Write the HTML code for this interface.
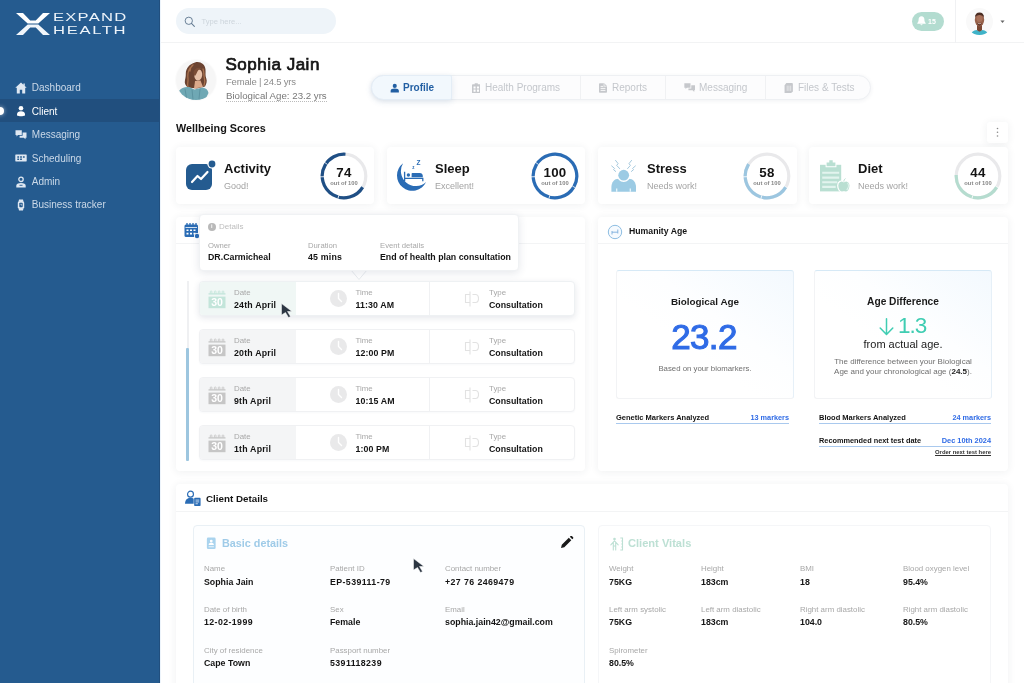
<!DOCTYPE html>
<html lang="en">
<head>
<meta charset="utf-8">
<title>Expand Health - Client Profile</title>
<style>
*{box-sizing:border-box;margin:0;padding:0}
html,body{width:1024px;height:683px;overflow:hidden;background:#fff;font-family:"Liberation Sans",sans-serif;color:#111}
body{will-change:transform}
.abs{position:absolute}
#side{position:absolute;left:0;top:0;width:160px;height:683px;background:#255b8f;border-right:1px solid #214f7e}
#side .item{position:absolute;left:0;width:160px;height:23px;color:#cbd9e8;font-size:10px;line-height:23px;padding-left:31.800px;white-space:nowrap}
#side .item.act{color:#fff}
#side .item svg{position:absolute;left:15px;top:5.500px;width:12px;height:12px}
#top{position:absolute;left:160px;top:0;width:864px;height:43px;background:#fff;border-bottom:1px solid #f2f3f4}
.card{position:absolute;background:#fff;border-radius:4px;box-shadow:0 1px 8px rgba(40,50,70,.075)}
.t{position:absolute;white-space:nowrap;line-height:1}
.c{text-align:center}
.r{text-align:right}
.box{border:1px solid #f2f3f5;border-top-color:#d6e9f6;border-right-color:#e6f0f8;border-radius:3px;background:linear-gradient(to bottom left,#f3f9fe 0,#fdfeff 40%,#fff 60%)}
</style>
</head>
<body>
<div id="side">
  <svg class="abs" style="left:16px;top:13px" width="34" height="22" viewBox="0 0 34 22"><path d="M0 0H7L14.200 7.500H19.800L27 0H34L22.300 10.600H11.700z" fill="#fff"/><path d="M0 22H7L14.200 14.500H19.800L27 22H34L22.300 11.400H11.700z" fill="#f1f6fb"/></svg>
  <div class="t" id="lg1" style="left:53.300px;top:12.500px;font-size:10.400px;color:#eef4fa;letter-spacing:.750px;transform-origin:0 0;transform:scaleX(1.6)">EXPAND</div>
  <div class="t" id="lg2" style="left:53.300px;top:25.800px;font-size:10.400px;color:#eef4fa;letter-spacing:1.030px;transform-origin:0 0;transform:scaleX(1.6)">HEALTH</div>
  <div class="item" style="top:76px"><svg viewBox="0 0 12 12"><path d="M6 .6L.3 5.800h1.500V11.400h3V7.800h2.400v3.600h3V5.800h1.500L9.800 4V1.400H8.400v1.400z" fill="#dfe8f2"/></svg>Dashboard</div>
  <div class="abs" style="left:0;top:98.500px;width:160px;height:23.500px;background:#214f7e"></div>
  <div class="item act" style="top:99.500px"><svg viewBox="0 0 12 12"><circle cx="6" cy="3.300" r="2.300" fill="#fff"/><path d="M2 10.500v-1.300C2 7.300 3.600 6.200 6 6.200s4 1.100 4 3v1.300c-1 .5-2.500.8-4 .8s-3-.3-4-.8z" fill="#fff"/></svg>Client</div>
  <div class="item" style="top:123px"><svg viewBox="0 0 12 12"><path d="M.5 1.300h6.300v4.700H3l-1.500 1.400V6H.5z" fill="#dfe8f2"/><path d="M7.600 3.500h3.900v5.200h-1v1.600L8.800 8.700H4.600V6.800h3z" fill="#dfe8f2"/></svg>Messaging</div>
  <div class="item" style="top:146.500px"><svg viewBox="0 0 12 12"><path d="M.8 2.400h10.400c.3 0 .5.2.5.5v6.200c0 .3-.2.500-.5.500H.8c-.3 0-.5-.2-.5-.5V2.900c0-.3.2-.5.500-.5z" fill="#dfe8f2"/><path d="M2.300 4.200h1.800v1.500H2.300zM5.100 4.200h1.800v1.500H5.100zM7.900 4.200h1.800v1.500H7.900zM2.300 6.600h1.800v1.500H2.300zM5.100 6.600h1.800v1.500H5.100z" fill="#255b8f"/></svg>Scheduling</div>
  <div class="item" style="top:170px"><svg viewBox="0 0 12 12"><circle cx="6" cy="3.300" r="2.200" fill="none" stroke="#dfe8f2" stroke-width="1.300"/><path d="M1.300 11.500V9.800C1.300 8 3 7 6 7s4.700 1 4.700 2.800v1.700z" fill="#dfe8f2"/><path d="M4.500 9.300h3" stroke="#255b8f" stroke-width=".9"/></svg>Admin</div>
  <div class="item" style="top:193px"><svg viewBox="0 0 12 12"><path d="M4 .5h4l.4 1.800H3.600zM3.600 9.700h4.800L8 11.500H4z" fill="#dfe8f2"/><rect x="2.800" y="2" width="6.400" height="8" rx="1.800" fill="#dfe8f2"/><rect x="4.300" y="3.800" width="3.400" height="4.400" rx=".8" fill="#255b8f"/><path d="M6 4.800V6h1" stroke="#dfe8f2" stroke-width=".7" fill="none"/></svg>Business tracker</div>
  <div class="abs" style="left:-4px;top:107px;width:8px;height:8px;border-radius:50%;background:#fff;box-shadow:0 0 4px rgba(255,255,255,.6)"></div>
</div>
<div id="top">
  <div class="abs" style="left:16px;top:8px;width:160px;height:26px;border-radius:13px;background:#eef4f9"></div>
  <div class="abs" style="left:752px;top:12px;width:32px;height:19px;border-radius:10px;background:#b3dcd0"></div>
  <svg class="abs" style="left:24px;top:15.500px" width="11.500" height="11.500" viewBox="0 0 12 12"><circle cx="5" cy="5" r="3.800" fill="none" stroke="#647b92" stroke-width="1"/><path d="M7.800 7.800l3 3" stroke="#647b92" stroke-width="1.100" stroke-linecap="round"/></svg>
  <svg class="abs" style="left:757px;top:16px" width="9" height="10" viewBox="0 0 9 10"><path d="M4.500.3C2.600.3 1.600 1.800 1.600 3.600c0 2-.6 2.800-1.300 3.500v.6h8.400v-.6C8 6.400 7.400 5.600 7.400 3.600 7.400 1.800 6.400.3 4.500.3zM3.400 8.300c.1.600.5 1 1.100 1s1-.4 1.100-1z" fill="#fff"/></svg>
  <svg class="abs" style="left:806px;top:8px" width="27" height="27" viewBox="0 0 27 27">
    <defs><clipPath id="cpB"><circle cx="13.500" cy="13.500" r="13.500"/></clipPath></defs>
    <g clip-path="url(#cpB)"><rect width="27" height="27" fill="#f9f9f9"/>
    <path d="M5 27c.3-3 2.500-4.500 5.500-5l3 1.300 3-1.300c3 .5 5.200 2 5.500 5z" fill="#3fb3c8"/>
    <path d="M11 17h5v5.200l-2.500 1.600L11 22.200z" fill="#7a4733"/>
    <ellipse cx="13.500" cy="11.800" rx="4.700" ry="6.600" fill="#96604a"/>
    <ellipse cx="13.500" cy="10.500" rx="3" ry="3.500" fill="#a8715a"/>
    <path d="M8.900 10c0-3.600 2-5.400 4.600-5.400s4.600 1.800 4.600 5.400c-.8-2.200-2.300-3-4.600-3s-3.800.8-4.600 3z" fill="#4a2c22"/>
    <path d="M11.200 14.800c1.300 1.400 3.300 1.400 4.600 0-.5 2.200-1.300 3-2.300 3s-1.800-.8-2.300-3z" fill="#5c3327"/>
    <path d="M11.900 15.300c1 .5 2.200.5 3.200 0" stroke="#f3e4dc" stroke-width=".6" fill="none"/></g>
  </svg>
  <svg class="abs" style="left:839.500px;top:19.800px" width="5" height="3.500" viewBox="0 0 6 4"><path d="M.5.500h5L3 3.500z" fill="#666"/></svg>
  <div class="t" style="left:41.500px;top:17.500px;font-size:7.600px;color:#cdd5dc">Type here...</div>
  <div class="t" style="left:768px;top:18px;font-size:7px;color:#fff;font-weight:bold">15</div>
  <div class="abs" style="left:794.500px;top:0;width:1px;height:43px;background:#f0f1f3"></div>
</div>
<div id="main">
  <div class="abs" style="left:160px;top:0;width:1px;height:683px;background:#edf4fb"></div>
  <!-- profile header -->
  <svg class="abs" style="left:174px;top:58px" width="44" height="44" viewBox="-2 -2 44 44">
    <defs><clipPath id="cpA"><circle cx="20" cy="20" r="20"/></clipPath></defs>
    <circle cx="20" cy="20" r="21" fill="#fbfbfb"/>
    <g clip-path="url(#cpA)">
      <rect width="40" height="40" fill="#f6f6f6"/>
      <path d="M19 2.500c5-1.500 10 1.500 10.500 7 .3 3.500-.5 6 .8 9 1 2.500.2 5.500-1.300 8l-8 2-9-1c-2.500-2-3.800-4.500-3-7.500.6-2.500.8-4 .8-6.500 0-5 3.500-9.500 9.200-11z" fill="#6b4331"/>
      <path d="M14 8c-2 3-2.500 7-2 11 .3 3-1 5 0 7.500M27 9c1.500 3 .5 7 1.500 10 .8 2.500 0 5-.5 6.500M17 5c-2 1.500-3 4-3 6" fill="none" stroke="#a8714e" stroke-width="1.300" stroke-linecap="round"/>
      <path d="M19 21l5.500-.5 2.500 6.500-9 1.500z" fill="#dba98b"/>
      <ellipse cx="22.300" cy="15" rx="3.900" ry="5.600" transform="rotate(8 22.300 15)" fill="#e8c2a9"/>
      <path d="M17.500 12c1-3.500 4.500-5.500 8.500-3.500-2.500.3-4 1.500-4.800 3.500-.5 1.500-1.200 2.800-2.200 4-.8-1-1.700-2.500-1.500-4z" fill="#7b4d36"/>
      <path d="M3 31c2-3 6-4.500 10-4l5.500 2.500 8-2c3.500.5 5.500 2.500 6 5.500l-3 6-12 2-11-3z" fill="#6fa8b4"/>
      <path d="M9 29l1.500 9M16 29.500l1 10M24 29l-1 10" stroke="#5c93a0" stroke-width="1" fill="none"/>
    </g>
  </svg>
  <div class="t" style="left:225.500px;top:56px;font-size:17px;letter-spacing:.5px;color:#141414;-webkit-text-stroke:.7px #141414">Sophia Jain</div>
  <div class="t" style="left:226px;top:77px;font-size:9.500px;letter-spacing:-.2px;color:#8b8b8b">Female | 24.5 yrs</div>
  <div class="t" style="left:226px;top:91px;font-size:9.700px;color:#777;border-bottom:1px dotted #bbb;padding-bottom:0">Biological Age: 23.2 yrs</div>

  <!-- tabs -->
  <div class="abs" style="left:371px;top:75px;width:500px;height:25px;border-radius:13px;background:#fcfcfd;border:1px solid #eef0f3;box-shadow:0 1px 4px rgba(40,60,90,.07)"></div>
  <div class="abs" style="left:371px;top:75px;width:81px;height:25px;border-radius:13px 2px 2px 13px;background:#f2f8fd;border:1px solid #e4edf6;box-shadow:0 2px 6px rgba(40,90,150,.12)"></div>
  <div class="abs" style="left:580px;top:76px;width:1px;height:23px;background:#f0f1f3"></div>
  <div class="abs" style="left:665px;top:76px;width:1px;height:23px;background:#f0f1f3"></div>
  <div class="abs" style="left:765px;top:76px;width:1px;height:23px;background:#f0f1f3"></div>
  <svg class="abs" style="left:389.500px;top:82.500px" width="9.500" height="10.500" viewBox="0 0 12 12"><circle cx="6" cy="3" r="2.600" fill="#225fa3"/><path d="M.8 11.500V9.300C.8 7.500 2.800 6.400 6 6.400s5.200 1.100 5.200 2.900v2.200z" fill="#225fa3"/></svg>
  <svg class="abs" style="left:471.500px;top:82.500px" width="8.500" height="10.500" viewBox="0 0 10 12"><path d="M3.200 0h3.600v1.300H9c.6 0 1 .4 1 1V11c0 .6-.4 1-1 1H1c-.6 0-1-.4-1-1V2.300c0-.6.400-1 1-1h2.200z" fill="#c6c8cc"/><path d="M1.800 3.800h2.400v2.400H1.800zM5.800 3.800h2.400v2.400H5.800zM1.800 7.600h2.400V10H1.800zM5.800 7.600h2.400V10H5.800z" fill="#fff"/></svg>
  <svg class="abs" style="left:599px;top:83px" width="8" height="10" viewBox="0 0 10 12"><path d="M1 0h5.500L10 3.500V11c0 .6-.4 1-1 1H1c-.6 0-1-.4-1-1V1c0-.6.400-1 1-1z" fill="#c6c8cc"/><path d="M2 4h3.500M2 6.500h6M2 9h6" stroke="#fff" stroke-width="1.100"/><path d="M6.300.5v3.300h3.300" fill="none" stroke="#fff" stroke-width=".8"/></svg>
  <svg class="abs" style="left:683.500px;top:83px" width="11.500" height="9.500" viewBox="0 0 12 10"><path d="M.3.300h6.500v4.700H3L1.500 6.400V5H.3z" fill="#c6c8cc"/><path d="M7.600 2.300h4.100v5.400h-1v1.700L9 7.700H4.600V5.800h3z" fill="#c6c8cc"/></svg>
  <svg class="abs" style="left:784px;top:82.500px" width="9" height="10.500" viewBox="0 0 10 12"><path d="M2.500 0H9c.6 0 1 .4 1 1v8.500c0 .6-.4 1-1 1H8.500V12H1.500c-.6 0-1-.4-1-1V2.500L2.500 0z" fill="#c6c8cc"/><path d="M3.500 3v6M5.500 3v6M7.500 3v6" stroke="#fff" stroke-width=".6"/></svg>
  <div class="t" style="left:403px;top:83px;font-size:10px;font-weight:bold;color:#225fa3">Profile</div>
  <div class="t" style="left:485px;top:83px;font-size:10px;color:#c4c7cc">Health Programs</div>
  <div class="t" style="left:612px;top:83px;font-size:10px;color:#c4c7cc">Reports</div>
  <div class="t" style="left:699px;top:83px;font-size:10px;color:#c4c7cc">Messaging</div>
  <div class="t" style="left:798px;top:83px;font-size:10px;color:#c4c7cc">Files &amp; Tests</div>

  <div class="t" style="left:176px;top:122.500px;font-size:10.800px;font-weight:bold;color:#141414">Wellbeing Scores</div>
  <div class="card" style="left:987px;top:122px;width:21px;height:21px;border-radius:3px"></div>
  <svg class="abs" style="left:996px;top:127px" width="3" height="11" viewBox="0 0 3 11"><circle cx="1.500" cy="1.500" r=".8" fill="#8a8a8a"/><circle cx="1.500" cy="5.300" r=".8" fill="#8a8a8a"/><circle cx="1.500" cy="9" r=".8" fill="#8a8a8a"/></svg>

  <!-- score cards -->
  <div class="card" style="left:176px;top:147px;width:198px;height:57px"></div>
  <div class="card" style="left:387px;top:147px;width:198px;height:57px"></div>
  <div class="card" style="left:598px;top:147px;width:199px;height:57px"></div>
  <div class="card" style="left:809px;top:147px;width:199px;height:57px"></div>
  <!-- score icons -->
  <svg class="abs" style="left:185px;top:159px" width="32" height="32" viewBox="0 0 32 32">
    <rect x="1" y="5" width="26" height="26" rx="6" fill="#245b90"/>
    <circle cx="27" cy="5" r="4.600" fill="#fff"/><circle cx="27" cy="5" r="3.400" fill="#245b90"/>
    <path d="M7 23l5.500-6 3.500 3 6.500-7" fill="none" stroke="#fff" stroke-width="2.200" stroke-linecap="round" stroke-linejoin="round"/>
  </svg>
  <svg class="abs" style="left:396px;top:158px" width="34" height="34" viewBox="0 0 34 34">
    <path d="M7.11 5.27A15.300 15.300 0 1 0 30.11 24.09A15 15 0 0 1 7.11 5.27z" fill="#2a6cb5"/>
    <path d="M8.600 13.800v9.200M8.600 20.300h18.200v3" fill="none" stroke="#2a6cb5" stroke-width="1.300"/>
    <path d="M15.600 19.300v-3.200c0-.6.400-1 1-1h7.200c1.700 0 3 1.300 3 3v1.200z" fill="#2a6cb5"/>
    <circle cx="12.400" cy="17" r="1.700" fill="#2a6cb5"/>
    <text x="20.500" y="6.800" font-size="6.500" font-weight="bold" fill="#2a6cb5" font-family="Liberation Sans, sans-serif">Z</text>
    <text x="16.300" y="10.800" font-size="4.500" font-weight="bold" fill="#2a6cb5" font-family="Liberation Sans, sans-serif">z</text>
  </svg>
  <svg class="abs" style="left:609px;top:158px" width="32" height="36" viewBox="0 0 32 36">
    <path d="M2.400 33.700V29c0-4.800 3.200-8.300 7-8.300h10.600c3.800 0 7 3.500 7 8.300v4.700z" fill="#9ccbe4"/>
    <circle cx="14.700" cy="17.200" r="6.700" fill="#fff"/>
    <circle cx="14.700" cy="17.200" r="5.400" fill="#9ccbe4"/>
    <path d="M7.700 30.400v3.300M21.300 30.400v3.300" stroke="#e9f6fc" stroke-width="1.300"/>
    <path d="M6.300 2.100l2.800 3.500-1.400 1.800 3.200 3.500M2.400 7.700l3.200 2.800-1.100 1.100 2.500 2.100M22.800 2.100L20 5.600l1.400 1.800-3.100 3.500M26.700 7.700l-3.200 2.800 1.100 1.100-2.500 2.100" fill="none" stroke="#a5c9de" stroke-width="1"/>
  </svg>
  <svg class="abs" style="left:819px;top:158px" width="32" height="36" viewBox="0 0 32 36">
    <path d="M1 6.800h21.200v26.600H1z" fill="#b9dfd2"/>
    <path d="M6.600 9.200V3.600h2.800V1.300h5.200v2.300h2.800v5.600z" fill="#fff"/>
    <path d="M7.600 8.300V4.500h2.700V2.200h3.400v2.300h2.700v3.800z" fill="#b9dfd2"/>
    <path d="M3.200 14.700h17M3.200 19.600h17M3.200 24.300h15M3.200 28.900h13.500" stroke="#e2f4ee" stroke-width="2.100"/>
    <path d="M24.900 23.800c2.300-1.700 6.200-.6 6.200 3.800 0 3.800-2.200 6.500-4.400 6.500-.7 0-1.100-.3-1.800-.3s-1.100.3-1.800.3c-2.200 0-4.400-2.700-4.400-6.500 0-4.400 3.900-5.500 6.200-3.800z" fill="#b9dfd2" stroke="#fff" stroke-width="1.200"/>
    <path d="M24.900 23.600c0-1.400.5-2.400 1.600-3" fill="none" stroke="#b9dfd2" stroke-width="1"/>
    <path d="M28.800 25.300c.9 1.400.7 4.400-.8 6.300" fill="none" stroke="#e2f4ee" stroke-width="1.100" stroke-linecap="round"/>
  </svg>
  <!-- rings -->
  <svg class="abs" style="left:319px;top:151px" width="50" height="50" viewBox="-25 -25 50 50"><circle r="21.800" fill="none" stroke="#e9e9eb" stroke-width="3.200"/><circle r="21.800" fill="none" stroke="#1f4f85" stroke-width="3.200" stroke-dasharray="92.15 138.23" transform="rotate(30)"/><line x1="-5.18" y1="19.32" x2="-6.21" y2="23.18" stroke="#fff" stroke-width="0.8"/><line x1="-19.99" y1="0.70" x2="-23.99" y2="0.84" stroke="#fff" stroke-width="0.8"/><line x1="-16.38" y1="-11.47" x2="-19.66" y2="-13.77" stroke="#fff" stroke-width="0.8"/><line x1="17.32" y1="10.00" x2="20.78" y2="12.00" stroke="#fff" stroke-width="0.8"/></svg>
  <div class="t" style="left:319px;top:166px;width:50px;text-align:center;font-size:13.300px;letter-spacing:.3px;font-weight:bold;color:#141414">74</div>
  <div class="t" style="left:319px;top:181px;width:50px;text-align:center;font-size:5.800px;font-weight:bold;color:#868686">out of 100</div>
  <svg class="abs" style="left:530px;top:151px" width="50" height="50" viewBox="-25 -25 50 50"><circle r="21.800" fill="none" stroke="#e9e9eb" stroke-width="3.200"/><circle r="21.800" fill="none" stroke="#2a6cb5" stroke-width="3.200" stroke-dasharray="138.23 138.23" transform="rotate(30)"/><line x1="-5.18" y1="19.32" x2="-6.21" y2="23.18" stroke="#fff" stroke-width="0.8"/><line x1="-19.99" y1="0.70" x2="-23.99" y2="0.84" stroke="#fff" stroke-width="0.8"/><line x1="-16.38" y1="-11.47" x2="-19.66" y2="-13.77" stroke="#fff" stroke-width="0.8"/><line x1="17.32" y1="10.00" x2="20.78" y2="12.00" stroke="#fff" stroke-width="0.8"/></svg>
  <div class="t" style="left:530px;top:166px;width:50px;text-align:center;font-size:13.300px;letter-spacing:.3px;font-weight:bold;color:#141414">100</div>
  <div class="t" style="left:530px;top:181px;width:50px;text-align:center;font-size:5.800px;font-weight:bold;color:#868686">out of 100</div>
  <svg class="abs" style="left:742px;top:151px" width="50" height="50" viewBox="-25 -25 50 50"><circle r="21.800" fill="none" stroke="#e9e9eb" stroke-width="3.200"/><circle r="21.800" fill="none" stroke="#9cc6e0" stroke-width="3.200" stroke-dasharray="69.12 138.23" transform="rotate(30)"/><line x1="-5.18" y1="19.32" x2="-6.21" y2="23.18" stroke="#fff" stroke-width="0.8"/><line x1="-19.99" y1="0.70" x2="-23.99" y2="0.84" stroke="#fff" stroke-width="0.8"/><line x1="17.32" y1="10.00" x2="20.78" y2="12.00" stroke="#fff" stroke-width="0.8"/></svg>
  <div class="t" style="left:742px;top:166px;width:50px;text-align:center;font-size:13.300px;letter-spacing:.3px;font-weight:bold;color:#141414">58</div>
  <div class="t" style="left:742px;top:181px;width:50px;text-align:center;font-size:5.800px;font-weight:bold;color:#868686">out of 100</div>
  <svg class="abs" style="left:953px;top:151px" width="50" height="50" viewBox="-25 -25 50 50"><circle r="21.800" fill="none" stroke="#e9e9eb" stroke-width="3.200"/><circle r="21.800" fill="none" stroke="#b5dccf" stroke-width="3.200" stroke-dasharray="57.60 138.23" transform="rotate(30)"/><line x1="-5.18" y1="19.32" x2="-6.21" y2="23.18" stroke="#fff" stroke-width="0.8"/><line x1="17.32" y1="10.00" x2="20.78" y2="12.00" stroke="#fff" stroke-width="0.8"/></svg>
  <div class="t" style="left:953px;top:166px;width:50px;text-align:center;font-size:13.300px;letter-spacing:.3px;font-weight:bold;color:#141414">44</div>
  <div class="t" style="left:953px;top:181px;width:50px;text-align:center;font-size:5.800px;font-weight:bold;color:#868686">out of 100</div>

  <div class="t" style="left:224px;top:162px;font-size:13px;font-weight:bold;color:#141414">Activity</div>
  <div class="t" style="left:224px;top:181.500px;font-size:9px;color:#a3a3a3">Good!</div>
  <div class="t" style="left:435px;top:162px;font-size:13px;font-weight:bold;color:#141414">Sleep</div>
  <div class="t" style="left:435px;top:181.500px;font-size:9px;color:#a3a3a3">Excellent!</div>
  <div class="t" style="left:647px;top:162px;font-size:13px;font-weight:bold;color:#141414">Stress</div>
  <div class="t" style="left:647px;top:181.500px;font-size:9px;color:#a3a3a3">Needs work!</div>
  <div class="t" style="left:858px;top:162px;font-size:13px;font-weight:bold;color:#141414">Diet</div>
  <div class="t" style="left:858px;top:181.500px;font-size:9px;color:#a3a3a3">Needs work!</div>
  <!-- humanity age card -->
  <div class="card" style="left:598px;top:217px;width:410px;height:254px"></div>
  <div class="abs" style="left:598px;top:243px;width:410px;height:1px;background:#f3f4f5"></div>
  <svg class="abs" style="left:607px;top:224px" width="16" height="16" viewBox="0 0 16 16"><circle cx="8" cy="8" r="6.700" fill="#f6fafe" stroke="#8dbde2" stroke-width="1"/><path d="M5 10.500V8.200h5.800V5.500M5 8.200V7M10.800 8.200v1.300" fill="none" stroke="#7aaedb" stroke-width=".9"/></svg>
  <div class="t" style="left:629px;top:227px;font-size:8.700px;font-weight:bold;color:#141414">Humanity Age</div>
  <div class="abs box" style="left:616px;top:270px;width:178px;height:129px"></div>
  <div class="abs box" style="left:814px;top:270px;width:178px;height:129px"></div>
  <div class="t c" style="left:616px;top:297px;width:178px;font-size:9.900px;font-weight:bold;color:#1a1a1a">Biological Age</div>
  <div class="t c" style="left:615px;top:319px;width:178px;font-size:35px;letter-spacing:-.6px;color:#2f6be6;-webkit-text-stroke:1.100px #2f6be6">23.2</div>
  <div class="t c" style="left:616px;top:365px;width:178px;font-size:7.800px;color:#6f6f6f">Based on your biomarkers.</div>
  <div class="t c" style="left:814px;top:297px;width:178px;font-size:10.200px;font-weight:bold;color:#1a1a1a">Age Difference</div>
  <svg class="abs" style="left:879px;top:318px" width="15" height="18" viewBox="0 0 15 18"><path d="M7.500 .8v15.500M1.200 10l6.300 6.500L13.800 10" fill="none" stroke="#3fcdb2" stroke-width="1.500" stroke-linecap="round" stroke-linejoin="round"/></svg>
  <div class="t" style="left:898px;top:315px;font-size:22.500px;letter-spacing:-1px;color:#3fcdb2">1.3</div>
  <div class="t c" style="left:814px;top:339px;width:178px;font-size:11px;color:#1a1a1a">from actual age.</div>
  <div class="t c" style="left:814px;top:357.800px;width:178px;font-size:8px;color:#6f6f6f">The difference between your Biological</div>
  <div class="t c" style="left:814px;top:368px;width:178px;font-size:8px;color:#6f6f6f">Age and your chronological age (<b style="color:#222">24.5</b>).</div>
  <div class="t" style="left:616px;top:414px;font-size:7.500px;font-weight:bold;color:#141414">Genetic Markers Analyzed</div>
  <div class="t r" style="left:616px;top:414px;width:173px;font-size:7.300px;font-weight:bold;color:#2f6be6">13 markers</div>
  <div class="abs" style="left:616px;top:422.500px;width:173px;height:1px;background:#a9c9ee"></div>
  <div class="t" style="left:819px;top:414px;font-size:7.500px;font-weight:bold;color:#141414">Blood Markers Analyzed</div>
  <div class="t r" style="left:819px;top:414px;width:172px;font-size:7.300px;font-weight:bold;color:#2f6be6">24 markers</div>
  <div class="abs" style="left:819px;top:422.500px;width:172px;height:1px;background:#a9c9ee"></div>
  <div class="t" style="left:819px;top:437px;font-size:7.350px;font-weight:bold;color:#141414">Recommended next test date</div>
  <div class="t r" style="left:819px;top:437px;width:172px;font-size:7.400px;font-weight:bold;color:#2f6be6">Dec 10th 2024</div>
  <div class="abs" style="left:819px;top:445.500px;width:172px;height:1px;background:#a9c9ee"></div>
  <div class="t r" style="left:819px;top:450px;width:172px;font-size:5.900px;font-weight:bold;color:#333;text-decoration:underline">Order next test here</div>
  <!-- client details card -->
  <div class="card" style="left:176px;top:484px;width:832px;height:210px"></div>
  <div class="abs" style="left:176px;top:511px;width:832px;height:1px;background:#f3f4f5"></div>
  <svg class="abs" style="left:184.500px;top:489.500px" width="16.500" height="16.500" viewBox="0 0 18 18">
    <circle cx="6" cy="4.500" r="3.200" fill="none" stroke="#2a6cb5" stroke-width="1.300"/>
    <path d="M0 15c0-4 2.500-6.500 6-6.500 1.500 0 2.500.4 3.500 1V15z" fill="#2a6cb5"/>
    <rect x="10" y="8.500" width="7" height="9" rx="1" fill="#2a6cb5"/>
    <path d="M11.500 11h4M11.500 13h4M11.500 15h2.500" stroke="#fff" stroke-width=".8"/>
  </svg>
  <div class="t" style="left:206px;top:493.500px;font-size:9.800px;font-weight:bold;color:#141414">Client Details</div>
  <div class="abs" style="left:193px;top:525px;width:392px;height:170px;border:1px solid #e9f0f5;border-radius:4px;background:#fdfeff"></div>
  <div class="abs" style="left:598px;top:525px;width:393px;height:170px;border:1px solid #f5f6f8;border-radius:4px;background:#fff"></div>
  <svg class="abs" style="left:206px;top:537px" width="10.500" height="12.500" viewBox="0 0 12 14">
    <rect x="1" y=".5" width="10" height="13" rx="1.500" fill="#a9d3ee"/>
    <circle cx="6" cy="4.500" r="1.600" fill="#fff"/><path d="M3 9c0-2 1.500-2.500 3-2.500S9 7 9 9z" fill="#fff"/><path d="M3 11h6" stroke="#fff" stroke-width=".9"/>
  </svg>
  <div class="t" style="left:222px;top:538px;font-size:10.800px;font-weight:bold;color:#9fcbe8">Basic details</div>
  <svg class="abs" style="left:560px;top:536px" width="14" height="13" viewBox="0 0 14 13"><path d="M1 12l.8-3.300 7-7 2.500 2.500-7 7zM9.800.8l.9-.8c.4-.3.900-.3 1.200 0l1.200 1.200c.300.300.300.800 0 1.200l-.8.900z" fill="#1a1a1a"/></svg>
  <div class="t" style="left:204px;top:565px;font-size:7.900px;color:#a8a8a8">Name</div>
  <div class="t" style="left:204px;top:577.8px;font-size:8.800px;font-weight:bold;color:#141414">Sophia Jain</div>
  <div class="t" style="left:330px;top:565px;font-size:7.900px;color:#a8a8a8">Patient ID</div>
  <div class="t" style="left:330px;top:577.8px;font-size:8.800px;font-weight:bold;letter-spacing:.4px;color:#141414">EP-539111-79</div>
  <div class="t" style="left:445px;top:565px;font-size:7.900px;color:#a8a8a8">Contact number</div>
  <div class="t" style="left:445px;top:577.8px;font-size:8.800px;font-weight:bold;letter-spacing:.4px;color:#141414">+27 76 2469479</div>
  <div class="t" style="left:204px;top:606px;font-size:7.900px;color:#a8a8a8">Date of birth</div>
  <div class="t" style="left:204px;top:618.2px;font-size:8.800px;font-weight:bold;letter-spacing:.4px;color:#141414">12-02-1999</div>
  <div class="t" style="left:330px;top:606px;font-size:7.900px;color:#a8a8a8">Sex</div>
  <div class="t" style="left:330px;top:618.2px;font-size:8.800px;font-weight:bold;color:#141414">Female</div>
  <div class="t" style="left:445px;top:606px;font-size:7.900px;color:#a8a8a8">Email</div>
  <div class="t" style="left:445px;top:618.2px;font-size:8.800px;font-weight:bold;color:#141414">sophia.jain42@gmail.com</div>
  <div class="t" style="left:204px;top:646.5px;font-size:7.900px;color:#a8a8a8">City of residence</div>
  <div class="t" style="left:204px;top:658.5px;font-size:8.800px;font-weight:bold;color:#141414">Cape Town</div>
  <div class="t" style="left:330px;top:646.5px;font-size:7.900px;color:#a8a8a8">Passport number</div>
  <div class="t" style="left:330px;top:658.5px;font-size:8.800px;font-weight:bold;letter-spacing:.4px;color:#141414">5391118239</div>
  <svg class="abs" style="left:609.500px;top:536.500px" width="14" height="14" viewBox="0 0 14 14">
    <circle cx="4.500" cy="2" r="1.300" fill="#bde0d4"/><path d="M4.500 3.800L.8 7.800M4.500 3.800l3.700 4M3.300 5v8M5.700 5v8M3.300 9h2.400" fill="none" stroke="#bde0d4" stroke-width="1.100" stroke-linecap="round"/>
    <path d="M10.300 1h2.200v12h-2.200M11.300 4h1.200M11.300 7h1.200M11.300 10h1.200" fill="none" stroke="#bde0d4" stroke-width="1.100"/>
  </svg>
  <div class="t" style="left:628px;top:538px;font-size:11.100px;font-weight:bold;color:#bde0d4">Client Vitals</div>
  <div class="t" style="left:609px;top:565px;font-size:7.900px;color:#a8a8a8">Weight</div>
  <div class="t" style="left:609px;top:577.8px;font-size:8.800px;font-weight:bold;color:#141414">75KG</div>
  <div class="t" style="left:701px;top:565px;font-size:7.900px;color:#a8a8a8">Height</div>
  <div class="t" style="left:701px;top:577.8px;font-size:8.800px;font-weight:bold;color:#141414">183cm</div>
  <div class="t" style="left:800px;top:565px;font-size:7.900px;color:#a8a8a8">BMI</div>
  <div class="t" style="left:800px;top:577.8px;font-size:8.800px;font-weight:bold;color:#141414">18</div>
  <div class="t" style="left:903px;top:565px;font-size:7.900px;color:#a8a8a8">Blood oxygen level</div>
  <div class="t" style="left:903px;top:577.8px;font-size:8.800px;font-weight:bold;color:#141414">95.4%</div>
  <div class="t" style="left:609px;top:606px;font-size:7.900px;color:#a8a8a8">Left arm systolic</div>
  <div class="t" style="left:609px;top:618.2px;font-size:8.800px;font-weight:bold;color:#141414">75KG</div>
  <div class="t" style="left:701px;top:606px;font-size:7.900px;color:#a8a8a8">Left arm diastolic</div>
  <div class="t" style="left:701px;top:618.2px;font-size:8.800px;font-weight:bold;color:#141414">183cm</div>
  <div class="t" style="left:800px;top:606px;font-size:7.900px;color:#a8a8a8">Right arm diastolic</div>
  <div class="t" style="left:800px;top:618.2px;font-size:8.800px;font-weight:bold;color:#141414">104.0</div>
  <div class="t" style="left:903px;top:606px;font-size:7.900px;color:#a8a8a8">Right arm diastolic</div>
  <div class="t" style="left:903px;top:618.2px;font-size:8.800px;font-weight:bold;color:#141414">80.5%</div>
  <div class="t" style="left:609px;top:646.5px;font-size:7.900px;color:#a8a8a8">Spirometer</div>
  <div class="t" style="left:609px;top:658.5px;font-size:8.800px;font-weight:bold;color:#141414">80.5%</div>
  <svg class="abs" style="left:413px;top:558px" width="12" height="15" viewBox="0 0 12 15"><path d="M.5.500l10.500 8H6.500l3 5-2 1-3-5L.5 12z" fill="#2c3642" stroke="#fff" stroke-width=".5"/></svg>
  <!-- appointments card -->
  <div class="card" style="left:176px;top:217px;width:409px;height:254px"></div>
  <div class="abs" style="left:176px;top:243px;width:409px;height:1px;background:#f3f4f5"></div>
  <svg class="abs" style="left:184px;top:223px" width="16" height="16" viewBox="0 0 16 16">
    <rect x=".5" y="1.500" width="13.500" height="12.500" rx="1.500" fill="#2a6cb5"/>
    <path d="M3 0v3M6 0v3M9 0v3M12 0v3" stroke="#2a6cb5" stroke-width="1.300"/>
    <path d="M2.500 6.500h2v1.600h-2zM6 6.500h2v1.600H6zM9.500 6.500h2v1.600h-2zM2.500 9.800h2v1.600h-2zM6 9.800h2v1.600H6zM9.500 9.800h2v1.600h-2z" fill="#fff"/>
    <path d="M1.500 4.500h11.500" stroke="#fff" stroke-width=".8"/>
    <circle cx="13" cy="13" r="3" fill="#fff"/><circle cx="13" cy="13" r="2.200" fill="#2a6cb5"/>
  </svg>
  <div class="abs" style="left:186.500px;top:281px;width:2px;height:67px;background:#eff0f2"></div>
  <div class="abs" style="left:186px;top:348px;width:3px;height:113px;background:#9dc6df;border-radius:1px"></div>
  <div class="abs" style="left:199px;top:281px;width:376px;height:35px;border:1px solid #f0f1f3;border-radius:4px;background:#fff;overflow:hidden;box-shadow:0 1px 2px rgba(40,60,90,.03);box-shadow:0 2px 6px rgba(40,60,90,.12);border-color:#eef1f3">
    <div class="abs" style="left:0;top:0;width:96px;height:35px;background:#f0f7f5"></div>
    <div class="abs" style="left:229px;top:0;width:1px;height:35px;background:#f0f1f3"></div>
  </div>
  <svg class="abs" style="left:208px;top:290px" width="18" height="19" viewBox="0 0 18 19">
      <path d="M.5 3.900h17" stroke="#c3e5da" stroke-width="1.300"/>
      <path d="M2.300 3.800V1.600c0-.9 1.600-.9 1.600 0v2.200M6.400 3.800V1.600c0-.9 1.600-.9 1.600 0v2.200M10.300 3.800V1.600c0-.9 1.600-.9 1.600 0v2.200M14.200 3.800V1.600c0-.9 1.600-.9 1.600 0v2.200" fill="none" stroke="#c3e5da" stroke-width=".9"/>
      <rect x=".5" y="6.600" width="17" height="11.600" fill="#c3e5da"/>
      <text x="9" y="16.300" text-anchor="middle" font-size="10.500" font-weight="bold" fill="#fff" font-family="Liberation Sans, sans-serif">30</text>
    </svg>
  <div class="t" style="left:234px;top:289.4px;font-size:7.900px;color:#a8a8a8">Date</div>
  <div class="t" style="left:234px;top:300.7px;font-size:8.800px;font-weight:bold;letter-spacing:.2px;color:#141414">24th April</div>
  <svg class="abs" style="left:330px;top:290px" width="17" height="17" viewBox="0 0 17 17"><circle cx="8.500" cy="8.500" r="8.500" fill="#e9e9ea"/><path d="M8.500 3.500v5l3 3" fill="none" stroke="#fff" stroke-width="1.400" stroke-linecap="round"/></svg>
  <div class="t" style="left:355.500px;top:289.4px;font-size:7.900px;color:#a8a8a8">Time</div>
  <div class="t" style="left:355.500px;top:300.7px;font-size:8.800px;font-weight:bold;letter-spacing:.1px;color:#141414">11:30 AM</div>
  <svg class="abs" style="left:464px;top:291px" width="15" height="16" viewBox="0 0 15 16"><path d="M6 .5v15M6 3.500H1.500v8H6M8.500 3.500h3c2 0 3 2 3 4s-1 4-3 4h-3" fill="none" stroke="#e2e2e2" stroke-width="1.100"/></svg>
  <div class="t" style="left:489px;top:289.4px;font-size:7.900px;color:#a8a8a8">Type</div>
  <div class="t" style="left:489px;top:300.7px;font-size:8.800px;font-weight:bold;color:#141414">Consultation</div>
  <div class="abs" style="left:199px;top:329px;width:376px;height:35px;border:1px solid #f0f1f3;border-radius:4px;background:#fff;overflow:hidden;box-shadow:0 1px 2px rgba(40,60,90,.03);">
    <div class="abs" style="left:0;top:0;width:96px;height:35px;background:#f4f5f6"></div>
    <div class="abs" style="left:229px;top:0;width:1px;height:35px;background:#f0f1f3"></div>
  </div>
  <svg class="abs" style="left:208px;top:338px" width="18" height="19" viewBox="0 0 18 19">
      <path d="M.5 3.900h17" stroke="#c6c6c6" stroke-width="1.300"/>
      <path d="M2.300 3.800V1.600c0-.9 1.600-.9 1.600 0v2.200M6.400 3.800V1.600c0-.9 1.600-.9 1.600 0v2.200M10.300 3.800V1.600c0-.9 1.600-.9 1.600 0v2.200M14.200 3.800V1.600c0-.9 1.600-.9 1.600 0v2.200" fill="none" stroke="#c6c6c6" stroke-width=".9"/>
      <rect x=".5" y="6.600" width="17" height="11.600" fill="#c6c6c6"/>
      <text x="9" y="16.300" text-anchor="middle" font-size="10.500" font-weight="bold" fill="#fff" font-family="Liberation Sans, sans-serif">30</text>
    </svg>
  <div class="t" style="left:234px;top:337.4px;font-size:7.900px;color:#a8a8a8">Date</div>
  <div class="t" style="left:234px;top:348.7px;font-size:8.800px;font-weight:bold;letter-spacing:.2px;color:#141414">20th April</div>
  <svg class="abs" style="left:330px;top:338px" width="17" height="17" viewBox="0 0 17 17"><circle cx="8.500" cy="8.500" r="8.500" fill="#e9e9ea"/><path d="M8.500 3.500v5l3 3" fill="none" stroke="#fff" stroke-width="1.400" stroke-linecap="round"/></svg>
  <div class="t" style="left:355.500px;top:337.4px;font-size:7.900px;color:#a8a8a8">Time</div>
  <div class="t" style="left:355.500px;top:348.7px;font-size:8.800px;font-weight:bold;letter-spacing:.1px;color:#141414">12:00 PM</div>
  <svg class="abs" style="left:464px;top:339px" width="15" height="16" viewBox="0 0 15 16"><path d="M6 .5v15M6 3.500H1.500v8H6M8.500 3.500h3c2 0 3 2 3 4s-1 4-3 4h-3" fill="none" stroke="#e2e2e2" stroke-width="1.100"/></svg>
  <div class="t" style="left:489px;top:337.4px;font-size:7.900px;color:#a8a8a8">Type</div>
  <div class="t" style="left:489px;top:348.7px;font-size:8.800px;font-weight:bold;color:#141414">Consultation</div>
  <div class="abs" style="left:199px;top:377px;width:376px;height:35px;border:1px solid #f0f1f3;border-radius:4px;background:#fff;overflow:hidden;box-shadow:0 1px 2px rgba(40,60,90,.03);">
    <div class="abs" style="left:0;top:0;width:96px;height:35px;background:#f4f5f6"></div>
    <div class="abs" style="left:229px;top:0;width:1px;height:35px;background:#f0f1f3"></div>
  </div>
  <svg class="abs" style="left:208px;top:386px" width="18" height="19" viewBox="0 0 18 19">
      <path d="M.5 3.900h17" stroke="#c6c6c6" stroke-width="1.300"/>
      <path d="M2.300 3.800V1.600c0-.9 1.600-.9 1.600 0v2.200M6.400 3.800V1.600c0-.9 1.600-.9 1.600 0v2.200M10.300 3.800V1.600c0-.9 1.600-.9 1.600 0v2.200M14.200 3.800V1.600c0-.9 1.600-.9 1.600 0v2.200" fill="none" stroke="#c6c6c6" stroke-width=".9"/>
      <rect x=".5" y="6.600" width="17" height="11.600" fill="#c6c6c6"/>
      <text x="9" y="16.300" text-anchor="middle" font-size="10.500" font-weight="bold" fill="#fff" font-family="Liberation Sans, sans-serif">30</text>
    </svg>
  <div class="t" style="left:234px;top:385.4px;font-size:7.900px;color:#a8a8a8">Date</div>
  <div class="t" style="left:234px;top:396.7px;font-size:8.800px;font-weight:bold;letter-spacing:.2px;color:#141414">9th April</div>
  <svg class="abs" style="left:330px;top:386px" width="17" height="17" viewBox="0 0 17 17"><circle cx="8.500" cy="8.500" r="8.500" fill="#e9e9ea"/><path d="M8.500 3.500v5l3 3" fill="none" stroke="#fff" stroke-width="1.400" stroke-linecap="round"/></svg>
  <div class="t" style="left:355.500px;top:385.4px;font-size:7.900px;color:#a8a8a8">Time</div>
  <div class="t" style="left:355.500px;top:396.7px;font-size:8.800px;font-weight:bold;letter-spacing:.1px;color:#141414">10:15 AM</div>
  <svg class="abs" style="left:464px;top:387px" width="15" height="16" viewBox="0 0 15 16"><path d="M6 .5v15M6 3.500H1.500v8H6M8.500 3.500h3c2 0 3 2 3 4s-1 4-3 4h-3" fill="none" stroke="#e2e2e2" stroke-width="1.100"/></svg>
  <div class="t" style="left:489px;top:385.4px;font-size:7.900px;color:#a8a8a8">Type</div>
  <div class="t" style="left:489px;top:396.7px;font-size:8.800px;font-weight:bold;color:#141414">Consultation</div>
  <div class="abs" style="left:199px;top:425px;width:376px;height:35px;border:1px solid #f0f1f3;border-radius:4px;background:#fff;overflow:hidden;box-shadow:0 1px 2px rgba(40,60,90,.03);">
    <div class="abs" style="left:0;top:0;width:96px;height:35px;background:#f4f5f6"></div>
    <div class="abs" style="left:229px;top:0;width:1px;height:35px;background:#f0f1f3"></div>
  </div>
  <svg class="abs" style="left:208px;top:434px" width="18" height="19" viewBox="0 0 18 19">
      <path d="M.5 3.900h17" stroke="#c6c6c6" stroke-width="1.300"/>
      <path d="M2.300 3.800V1.600c0-.9 1.600-.9 1.600 0v2.200M6.400 3.800V1.600c0-.9 1.600-.9 1.600 0v2.200M10.300 3.800V1.600c0-.9 1.600-.9 1.600 0v2.200M14.200 3.800V1.600c0-.9 1.600-.9 1.600 0v2.200" fill="none" stroke="#c6c6c6" stroke-width=".9"/>
      <rect x=".5" y="6.600" width="17" height="11.600" fill="#c6c6c6"/>
      <text x="9" y="16.300" text-anchor="middle" font-size="10.500" font-weight="bold" fill="#fff" font-family="Liberation Sans, sans-serif">30</text>
    </svg>
  <div class="t" style="left:234px;top:433.4px;font-size:7.900px;color:#a8a8a8">Date</div>
  <div class="t" style="left:234px;top:444.7px;font-size:8.800px;font-weight:bold;letter-spacing:.2px;color:#141414">1th April</div>
  <svg class="abs" style="left:330px;top:434px" width="17" height="17" viewBox="0 0 17 17"><circle cx="8.500" cy="8.500" r="8.500" fill="#e9e9ea"/><path d="M8.500 3.500v5l3 3" fill="none" stroke="#fff" stroke-width="1.400" stroke-linecap="round"/></svg>
  <div class="t" style="left:355.500px;top:433.4px;font-size:7.900px;color:#a8a8a8">Time</div>
  <div class="t" style="left:355.500px;top:444.7px;font-size:8.800px;font-weight:bold;letter-spacing:.1px;color:#141414">1:00 PM</div>
  <svg class="abs" style="left:464px;top:435px" width="15" height="16" viewBox="0 0 15 16"><path d="M6 .5v15M6 3.500H1.500v8H6M8.500 3.500h3c2 0 3 2 3 4s-1 4-3 4h-3" fill="none" stroke="#e2e2e2" stroke-width="1.100"/></svg>
  <div class="t" style="left:489px;top:433.4px;font-size:7.900px;color:#a8a8a8">Type</div>
  <div class="t" style="left:489px;top:444.7px;font-size:8.800px;font-weight:bold;color:#141414">Consultation</div>
  <!-- details popup -->
  <svg class="abs" style="left:350px;top:269px" width="18" height="12" viewBox="0 0 18 12"><path d="M1 1l8 9.500L17 1" fill="#fff" stroke="#e9ecef" stroke-width="1"/></svg>
  <div class="abs" style="left:199px;top:214px;width:320px;height:57px;background:#fff;border-radius:4px;border:1px solid #f0f2f4;box-shadow:0 2px 8px rgba(40,60,90,.12)"></div>
  <div class="abs" style="left:208px;top:222.500px;width:8px;height:8px;border-radius:50%;background:#b9b9b9"></div>
  <div class="t" style="left:211px;top:224px;font-size:5.500px;color:#fff;font-weight:bold">i</div>
  <div class="t" style="left:219px;top:223px;font-size:8px;color:#bdbdbd">Details</div>
  <div class="t" style="left:208px;top:241.500px;font-size:7.700px;color:#a8a8a8">Owner</div>
  <div class="t" style="left:208px;top:252.700px;font-size:8.800px;font-weight:bold;color:#141414">DR.Carmicheal</div>
  <div class="t" style="left:308px;top:241.500px;font-size:7.700px;color:#a8a8a8">Duration</div>
  <div class="t" style="left:308px;top:252.700px;font-size:8.800px;font-weight:bold;letter-spacing:.2px;color:#141414">45 mins</div>
  <div class="t" style="left:380px;top:241.500px;font-size:7.700px;color:#a8a8a8">Event details</div>
  <div class="t" style="left:380px;top:252.700px;font-size:8.800px;font-weight:bold;color:#141414">End of health plan consultation</div>
  <svg class="abs" style="left:281px;top:303px" width="12" height="15" viewBox="0 0 12 15"><path d="M.5.500l10.500 8H6.500l3 5-2 1-3-5L.5 12z" fill="#2c3642" stroke="#fff" stroke-width=".5"/></svg>
</div>
</body>
</html>
